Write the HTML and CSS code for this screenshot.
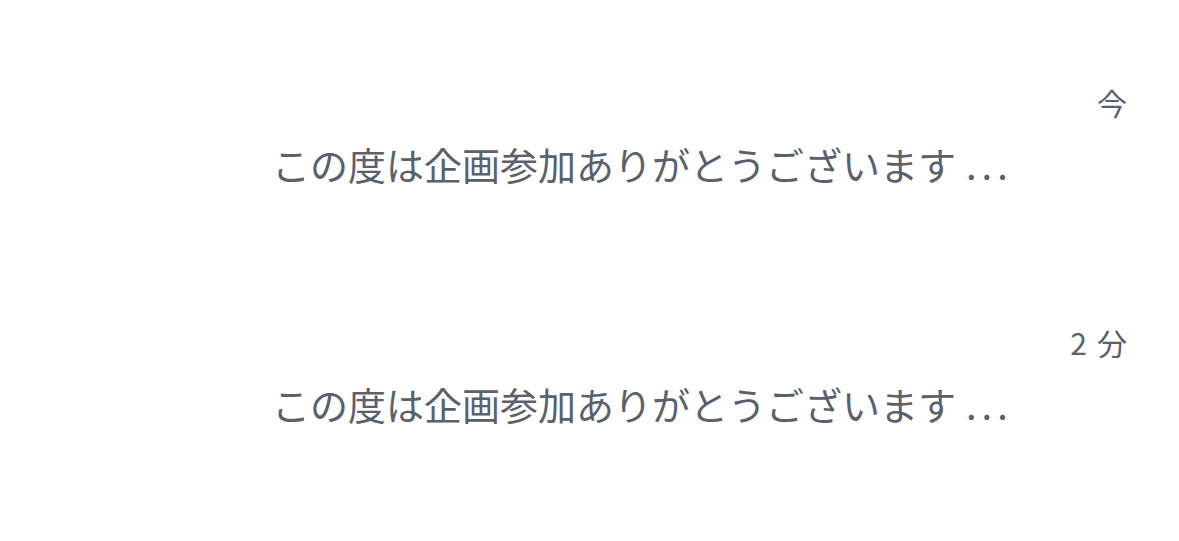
FILE: index.html
```html
<!DOCTYPE html>
<html lang="ja">
<head>
  <meta charset="UTF-8">
  <title>メッセージ</title>
  <link rel="stylesheet" href="styles.css">
</head>
<body>

  <div class="thread-list">
    <div class="thread">
      <div class="thread-time">今</div>
      <div class="thread-preview">この度は企画参加ありがとうございます<span class="more">...</span></div>
    </div>
    <div class="thread">
      <div class="thread-time">2<span class="unit">分</span></div>
      <div class="thread-preview">この度は企画参加ありがとうございます<span class="more">...</span></div>
    </div>
  </div>

</body>
</html>
```

FILE: styles.css
```css
body {
  margin: 0;
  font-family: 'Noto Sans CJK JP', 'Noto Sans', sans-serif;
  background: #fff;
  color: #5a616d;
}

.thread-list {
  display: flex;
  flex-direction: column;
  padding: 82px 52px 0 272px;
}

.thread {
  display: flex;
  flex-direction: column;
  gap: 17px;
  padding-bottom: 133px;
}

.thread-time {
  text-align: right;
  font-size: 30px;
  line-height: 40px;
}

.thread-time .unit {
  margin-left: 10px;
}

.thread-preview {
  font-size: 38px;
  line-height: 50px;
  white-space: nowrap;
}

.thread-preview .more {
  margin-left: 10px;
  letter-spacing: 5px;
}
```
